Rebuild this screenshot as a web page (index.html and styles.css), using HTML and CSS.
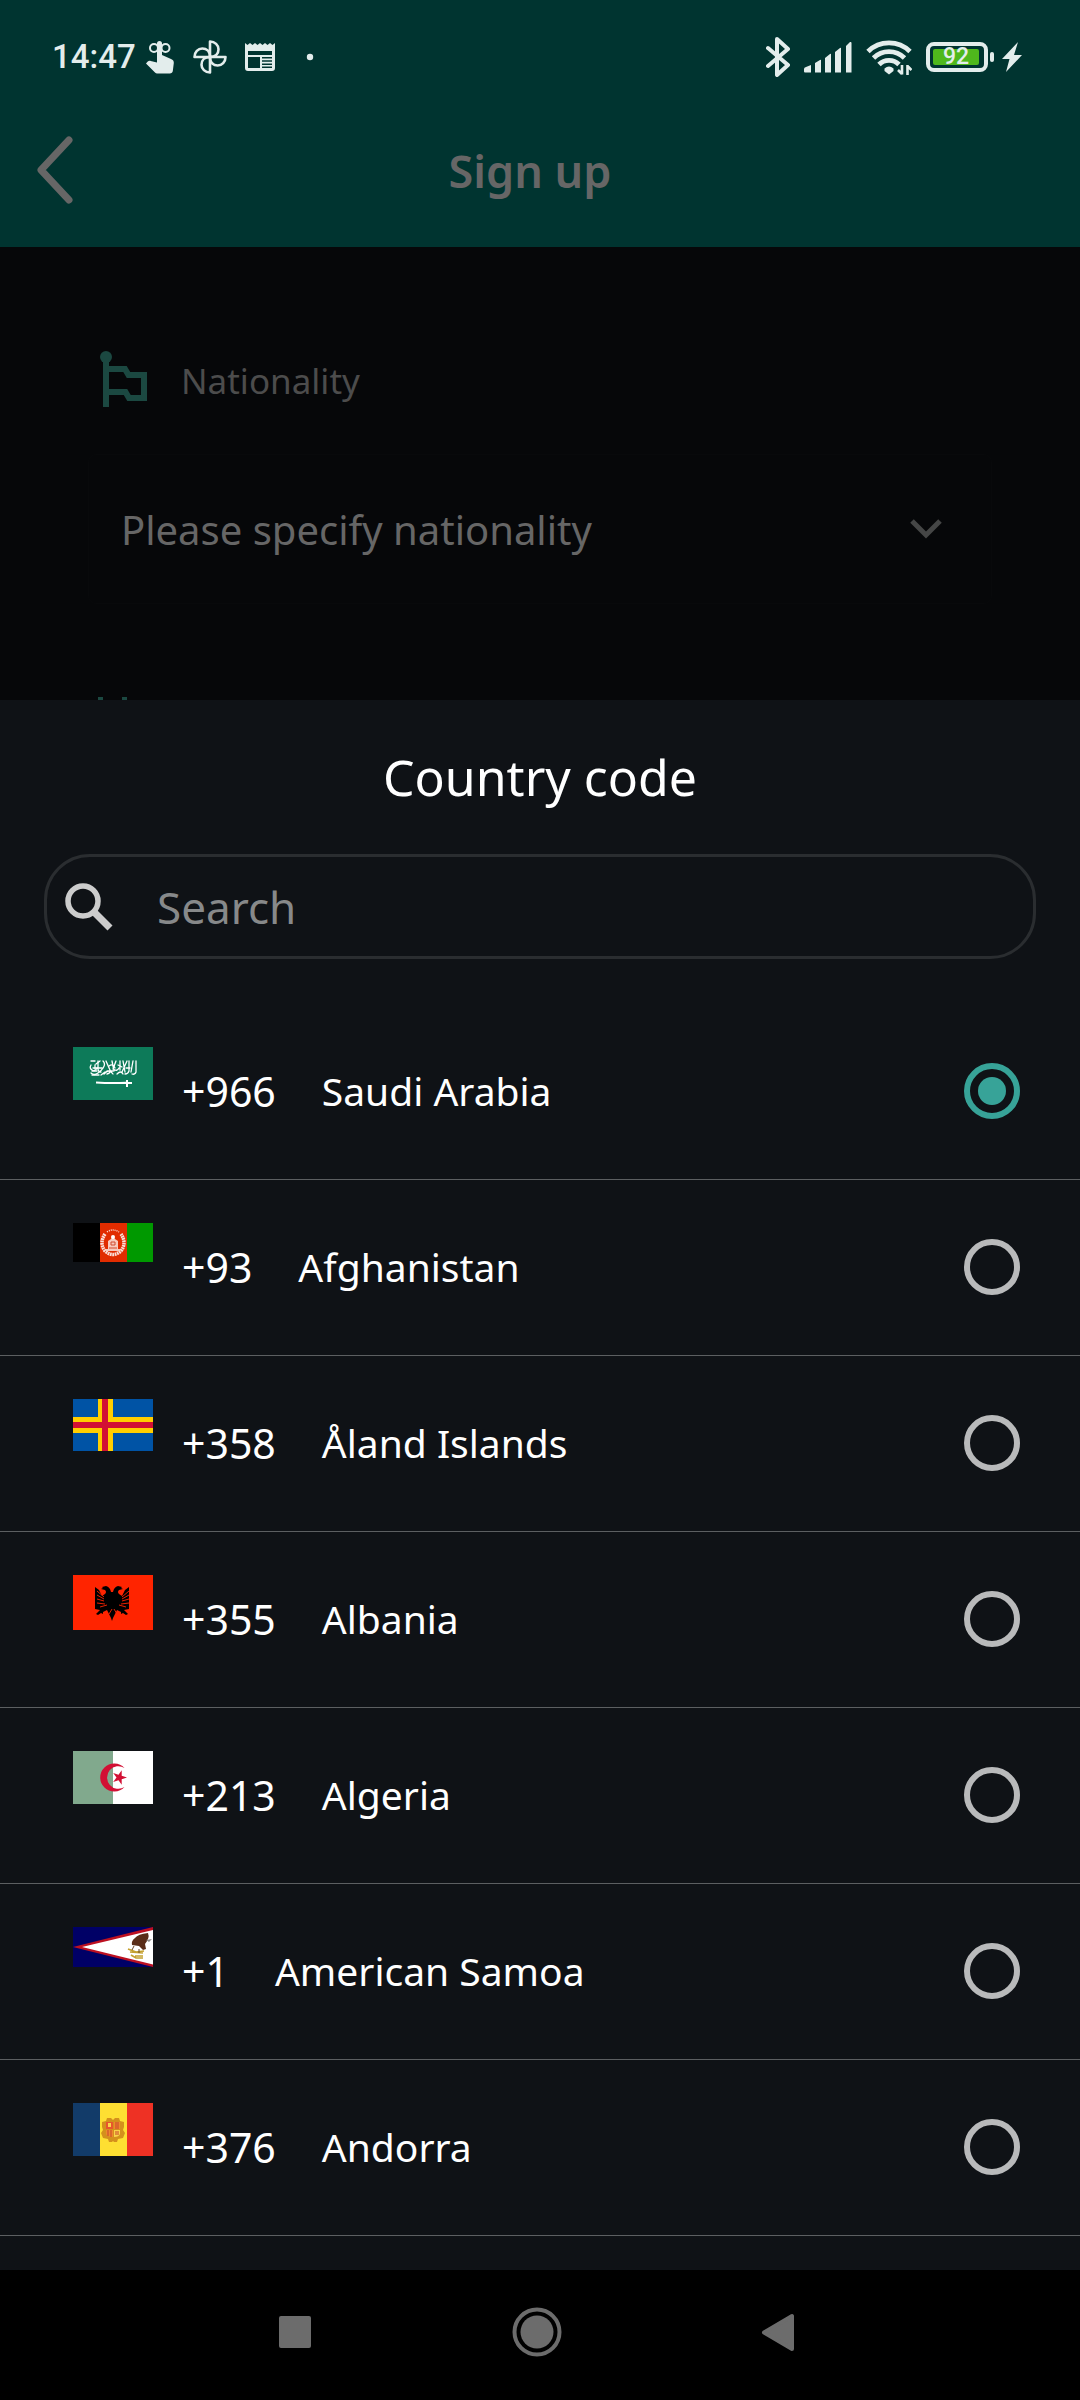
FILE: index.html
```html
<!DOCTYPE html>
<html lang="en">
<head>
<meta charset="utf-8">
<meta name="viewport" content="width=device-width, initial-scale=1">
<title>Sign up</title>
<link rel="stylesheet" href="styles.css">
</head>
<body>
<div class="screen">
  <header class="top">
    <div class="status">
      <div class="status-left">
        <span class="clock">14:47</span>
        <svg class="status-icon" viewBox="0 0 36 36" fill="currentColor" aria-hidden="true">
          <path d="M15 4.500a2.500 2.500 0 0 1 5 0V16l9 4c2 .8 3 2 2.800 4l-1 8c-.3 1.600-1.200 2.500-3 2.500H16c-1.500 0-2.500-.5-3.500-1.500L4 24.500l1.500-1.800c1-.8 2-1 3.200-.7L15 23.500z"/>
          <g fill="none" stroke="currentColor" stroke-width="2"><circle cx="12" cy="9" r="4"/><circle cx="23.500" cy="9" r="4"/></g>
        </svg>
        <svg class="status-icon" viewBox="0 0 36 36" fill="none" stroke="currentColor" stroke-width="2.600" stroke-linejoin="round" aria-hidden="true">
          <path d="M18 18V2.500c5 0 8.500 3.600 8.500 7.800 0 4-2.500 7.700-8.500 7.700z"/>
          <path d="M18 18h15.500c0 5-3.600 8.500-7.800 8.500-4 0-7.700-2.500-7.700-8.500z"/>
          <path d="M18 18v15.500c-5 0-8.500-3.600-8.500-7.800 0-4 2.500-7.700 8.500-7.700z"/>
          <path d="M18 18H2.500c0-5 3.600-8.500 7.800-8.500 4 0 7.700 2.500 7.700 8.500z"/>
        </svg>
        <svg class="status-icon" viewBox="0 0 36 36" aria-hidden="true">
          <path fill="currentColor" fill-rule="evenodd" d="M3 4l2.500 2L8 4l2.500 2L13 4l2.500 2L18 4l2.500 2L23 4l2.500 2L28 4l2.500 2L33 4v25a3 3 0 0 1-3 3H6a3 3 0 0 1-3-3zM6 12v4h24v-4zm0 6v11h12V18zm14 0v1.400h10V18zm0 3.200v1.600h10v-1.600zm0 3.200V26h10v-1.600zm0 3.200V29h10v-1.400z"/>
        </svg>
        <svg class="status-icon" viewBox="0 0 36 36" fill="currentColor" aria-hidden="true"><circle cx="18" cy="18" r="3.200"/></svg>
      </div>
      <div class="status-right">
        <svg class="bluetooth" viewBox="0 0 24 40" fill="none" stroke="currentColor" stroke-width="4" stroke-linejoin="round" stroke-linecap="round" aria-hidden="true"><path d="M2 11l20 17-11 10V2l11 10L2 29"/></svg>
        <svg class="signal" viewBox="0 0 48 32" fill="currentColor" aria-hidden="true">
          <path d="M0 28q0-1.500 2-2l5-2v7.500H1q-1 0-1-1zM11 22l5-3q1-.5 1 0v12.500h-6zM21 17l5-4q1-.5 1 0v18.500h-6zM31 11l5-4q1-.5 1 0v24.500h-6zM42 5l4-4q1.500-.5 1.500 1v29.500H42z"/>
        </svg>
        <svg class="wifi" viewBox="0 0 46 36" fill="none" stroke="currentColor" stroke-width="4.800" aria-hidden="true">
          <path d="M2 12.500a30 30 0 0 1 42 0"/><path d="M7.500 19a22 22 0 0 1 31 0"/><path d="M13 25.500a14 14 0 0 1 20 0"/>
          <path fill="currentColor" stroke="none" d="M18.500 29.500q4.500-4 9 0v2.500l-4.500 3.500-4.500-3.500z"/>
          <path stroke-width="2.600" d="M36 26v9.500M36 35l-4-4M41.500 36v-10M41.500 27l4 4"/>
        </svg>
        <div class="power">
          <span class="battery"><span class="charge">92</span></span>
          <svg class="bolt" viewBox="0 0 20 30" fill="currentColor" aria-hidden="true"><path d="M16 0L0 17h7.500L4 30l16-17h-8z"/></svg>
        </div>
      </div>
    </div>
    <div class="titlebar">
      <button class="back" type="button" aria-label="Back">
        <svg viewBox="0 0 36 68" fill="none" stroke="currentColor" stroke-width="7" stroke-linecap="round" stroke-linejoin="round" aria-hidden="true"><path d="M32 4L4 34l28 30"/></svg>
      </button>
      <h1>Sign up</h1>
    </div>
  </header>

  <main class="form">
    <label class="field-label" for="nationality">
      <svg class="flag-icon" viewBox="0 0 48 56" aria-hidden="true">
        <circle cx="6" cy="6" r="6" fill="currentColor"/>
        <path d="M6 6v50M6 18h19l3.500 6H44v23H29l-3.500-6H6" fill="none" stroke="currentColor" stroke-width="6"/>
      </svg>
      <span>Nationality</span>
    </label>
    <div class="select-wrap">
      <select id="nationality"><option>Please specify nationality</option></select>
      <svg class="chevron" viewBox="0 0 32 20" fill="none" stroke="currentColor" stroke-width="5" aria-hidden="true"><path d="M2 2l14 14L30 2"/></svg>
    </div>
    <svg class="next-icon" viewBox="0 0 32 3" fill="currentColor" aria-hidden="true"><path d="M0 0h5v3H0zM24 0h5v3h-5z"/></svg>
  </main>

  <section class="sheet" aria-labelledby="sheet-title">
    <h2 id="sheet-title">Country code</h2>
    <div class="search">
      <svg viewBox="0 0 48 48" fill="none" stroke="currentColor" aria-hidden="true"><circle cx="18" cy="18" r="15" stroke-width="5.500"/><path d="M29 29l16 16" stroke-width="7"/></svg>
      <input type="search" placeholder="Search" aria-label="Search">
    </div>
    <ul class="countries">
      <li><label class="country">
        <svg class="flag" viewBox="0 0 80 53" aria-hidden="true">
          <path fill="#0d7a59" d="M0 0h80v53H0z"/>
          <g fill="none" stroke="#fff" stroke-width="1.300" stroke-linecap="round">
            <path d="M18 18q-2 3 1 5t5-2M18 26q3 3 7 0t5-5M25 14v8q0 3 3 3M30 14q3 3 0 7M33 14l4 9q1 3-3 4M39 14l2 10M43 14l-3 8q4 3 6-1M47 14v9M50 14l2 11M54 14l-5 11M56 14v10q-1 3-4 3M60 14l-2 11M63 14v11q-1 3-4 2"/>
            <path d="M18 14h4M20 21h9M19 28h7M31 27q5-6 9 0M36 19q4-3 6 2M44 27q4-4 6 0M23 17l4-3M19 24h5M28 28l4-3M34 24h6M45 18l4 2M53 21h4M22 18v4"/>
          </g>
          <path d="M23 35.500q15 1 30 .3M50 36h9M54 33v7" fill="none" stroke="#fff" stroke-width="2"/>
        </svg>
        <span class="code">+966</span><span class="name">Saudi Arabia</span>
        <input type="radio" name="country" checked>
      </label></li>
      <li><label class="country">
        <svg class="flag" viewBox="0 0 80 39" aria-hidden="true">
          <path fill="#000" d="M0 0h27v39H0z"/><path fill="#e12c00" d="M27 0h27v39H27z"/><path fill="#009900" d="M54 0h26v39H54z"/>
          <g fill="none" stroke="#fff" opacity=".85">
            <path d="M32 11q-6 9 0 17 8 7 16 0 6-8 0-17" stroke-width="3.500" stroke-dasharray="1.800 .6"/>
            <path d="M34 9q6-4 12 0" stroke-width="1.500" stroke-dasharray="1 1"/>
          </g>
          <path fill="#f7c9bd" d="M35 26V18l3-2q2-4 4 0l3 2v8h2v2H33v-2z"/><circle cx="40" cy="14" r="2" fill="#fff"/>
          <path d="M38 19v3h4v-3zM36 25h8" fill="none" stroke="#d14a30"/>
        </svg>
        <span class="code">+93</span><span class="name">Afghanistan</span>
        <input type="radio" name="country">
      </label></li>
      <li><label class="country">
        <svg class="flag" viewBox="0 0 80 52" aria-hidden="true">
          <path fill="#0053a5" d="M0 0h80v52H0z"/><path fill="#ffce00" d="M25 0h15v18h40v16H40v18H25V34H0V18h25z"/><path fill="#d21034" d="M29 0h6v23h45v6H35v23h-6V29H0v-6h29z"/>
        </svg>
        <span class="code">+358</span><span class="name">Åland Islands</span>
        <input type="radio" name="country">
      </label></li>
      <li><label class="country">
        <svg class="flag" viewBox="0 0 80 55" aria-hidden="true">
          <path fill="#ff2400" d="M0 0h80v55H0z"/>
          <path d="M40 17q1-5 5-6l4 1-1 1 2 1-4 1q-2 2 0 4l3 2 3-6 4-3v22l-5 1 4 4-2 1-3-2-2 1v-2l-4-2-2 4-2 4-1 3-1-3-2-4-2-4-4 2v2l-2-1-3 2-2-1 4-4-5-1V12l4 3 3 6 3-2q2-2 0-4l-4-1 2-1-1-1 4-1q4 1 5 6z"/>
          <path d="M24 16l7 6M24 20l7 4M24 24l7 2M24 28l8 1M56 16l-7 6M56 20l-7 4M56 24l-7 2M56 28l-8 1M27 32l7-2M53 32l-7-2M36 39l3-5M44 39l-3-5" stroke="#ff2400" stroke-width=".9"/>
        </svg>
        <span class="code">+355</span><span class="name">Albania</span>
        <input type="radio" name="country">
      </label></li>
      <li><label class="country">
        <svg class="flag" viewBox="0 0 80 53" aria-hidden="true">
          <path fill="#81a98d" d="M0 0h40v53H0z"/><path fill="#fff" d="M40 0h40v53H40z"/>
          <path fill="#d21034" d="M51.500 17A14 14 0 1 0 51.500 36 11.300 11.300 0 1 1 51.500 17zM54 26.500l-5.300 1.700v5.500l-3.200-4.500-5.300 1.700 3.300-4.400-3.300-4.400 5.300 1.700 3.200-4.500v5.500z"/>
        </svg>
        <span class="code">+213</span><span class="name">Algeria</span>
        <input type="radio" name="country">
      </label></li>
      <li><label class="country">
        <svg class="flag" viewBox="0 0 80 40" aria-hidden="true">
          <path fill="#000066" d="M0 0h80v40H0z"/><path fill="#bd1021" d="M80 0v40L0 20z"/><path fill="#fff" d="M80 3v34.500L9 20z"/>
          <path fill="#5a2d18" d="M75 6q-10 1-13 5-4 3-3 7l7 1 4 4 3-1-1-5q5-6 3-11z"/>
          <path fill="#8e8a88" d="M73 13l6-1-3 3z"/>
          <path d="M55 22l8 3 8-1M57 25l13 1M58 28l5 3h7M62 29l8 0" fill="none" stroke="#c4a02f" stroke-width="1.700"/>
          <path d="M66 22v4M61 19l-2 4" stroke="#6b4a2a"/>
        </svg>
        <span class="code">+1</span><span class="name">American Samoa</span>
        <input type="radio" name="country">
      </label></li>
      <li><label class="country">
        <svg class="flag" viewBox="0 0 80 53" aria-hidden="true">
          <path fill="#123b69" d="M0 0h27v53H0z"/><path fill="#fedf32" d="M27 0h27v53H27z"/><path fill="#ee3124" d="M54 0h26v53H54z"/>
          <path fill="#d4901c" d="M34 15h4l2 2 2-2h4l1 3 4 1v5l-1 3 2 3-2 5-5 1-1 3h-3l-1-1-1 1h-3l-1-3-5-1-2-5 2-3-1-3v-5l4-1z"/>
          <path fill="#e8552d" d="M33 19h7v7h-7z"/><path fill="#f08a2c" d="M41 19h6v7h-6zM33 27h7v7q-6 0-7-3z"/><path fill="#fbd34a" d="M41 27h6v4q-1 3-6 3zM35 20h3v4h-3z"/>
          <path d="M43 19v7M45 19v7M35 27v6M38 27v7M42 29h4M42 31h4" stroke="#c6452a"/>
        </svg>
        <span class="code">+376</span><span class="name">Andorra</span>
        <input type="radio" name="country">
      </label></li>
    </ul>
  </section>

  <nav class="navbar" aria-label="System">
    <button type="button" aria-label="Recent apps"><svg viewBox="0 0 50 50" fill="currentColor" aria-hidden="true"><rect x="9" y="9" width="32" height="32" rx="2"/></svg></button>
    <button type="button" aria-label="Home"><svg viewBox="0 0 50 50" aria-hidden="true"><circle cx="25" cy="25" r="22.500" fill="none" stroke="currentColor" stroke-width="4"/><circle cx="25" cy="25" r="16.500" fill="currentColor"/></svg></button>
    <button type="button" aria-label="Back"><svg viewBox="0 0 50 50" fill="currentColor" stroke="currentColor" stroke-width="4" stroke-linejoin="round" aria-hidden="true"><path d="M38 9v33L10 25.500z"/></svg></button>
  </nav>
</div>
</body>
</html>
```
FILE: styles.css
```css
* { box-sizing: border-box; }

body {
  margin: 0;
  background: #000;
  color: #fff;
  font-family: "Noto Sans", "Open Sans", sans-serif;
}

h1, h2, ul { margin: 0; padding: 0; }
svg { display: block; flex: none; }
button { border: 0; padding: 0; background: none; color: inherit; }

.screen {
  display: flex;
  flex-direction: column;
  min-height: 100vh;
}

/* Status bar and title */
.top { background: #003430; }

.status {
  display: flex;
  justify-content: space-between;
  padding: 37px 58px 20px 52px;
  color: #e3edec;
}

.status-left, .status-right {
  display: flex;
  align-items: center;
  height: 40px;
  gap: 14px;
}

.clock {
  margin-right: -8px;
  font: 500 33px/40px Roboto, sans-serif;
}

.status-icon { width: 36px; height: 36px; }
.bluetooth { width: 24px; height: 40px; }
.signal { width: 48px; height: 32px; }
.wifi { width: 46px; height: 36px; }
.bolt { width: 20px; height: 30px; }

.power { display: flex; align-items: center; gap: 14px; }

.battery {
  position: relative;
  width: 62px;
  height: 30px;
  padding: 3px;
  border: 4px solid currentColor;
  border-radius: 8px;
}

.battery::after {
  content: "";
  position: absolute;
  top: 6px;
  right: -10px;
  width: 4px;
  height: 10px;
  border-radius: 2px;
  background: currentColor;
}

.charge {
  display: block;
  width: 46px;
  border-radius: 2px;
  background: #4fb81c;
  font: 500 23px/16px Roboto, sans-serif;
  text-align: center;
}

.titlebar {
  display: grid;
  grid-template-columns: 1fr auto 1fr;
  align-items: center;
  height: 150px;
  padding: 0 57px 4px 37px;
  color: #666;
}

.back { width: 36px; }
.back svg { width: 36px; height: 68px; }

h1 { font-size: 45px; font-weight: 600; }

/* Dimmed form behind the sheet */
.form {
  padding: 104px 88px 0;
  background: #060709;
}

.field-label {
  display: flex;
  align-items: center;
  gap: 33px;
  padding-left: 12px;
  color: #4c4c4c;
  font-size: 35px;
  line-height: 52px;
}

.field-label span { padding-top: 4px; }

.flag-icon { width: 48px; height: 56px; color: #1b4841; }

.select-wrap {
  display: grid;
  align-items: center;
  margin: 47px 0 93px;
}

.select-wrap > * { grid-area: 1 / 1; }

select {
  width: 100%;
  height: 150px;
  padding: 0 32px;
  border: 1px solid #08090b;
  border-radius: 8px;
  appearance: none;
  background: transparent;
  color: #666;
  font: 40px "Noto Sans", sans-serif;
}

.chevron {
  justify-self: end;
  width: 32px;
  height: 20px;
  margin-right: 50px;
  color: #454646;
  pointer-events: none;
}

.next-icon { width: 32px; height: 3px; margin-left: 10px; color: #1b4841; }

/* Country picker */
.sheet {
  flex: 1;
  padding: 44px 0 34px;
  background: #0f1216;
}

h2 {
  font-size: 50px;
  font-weight: 400;
  line-height: 66px;
  text-align: center;
}

.search {
  display: flex;
  align-items: center;
  gap: 44px;
  height: 105px;
  margin: 44px 44px 45px;
  padding: 0 18px;
  border: 3px solid #2a2d30;
  border-radius: 46px;
  color: #ccc;
}

.search svg { width: 48px; height: 48px; }

.search input {
  flex: 1;
  min-width: 0;
  padding: 0;
  border: 0;
  outline: 0;
  background: none;
  color: #fff;
  font: 44px "Noto Sans", sans-serif;
}

.search input::placeholder { color: #87898a; opacity: 1; }

.countries { list-style: none; }

.country {
  display: flex;
  align-items: center;
  height: 176px;
  padding: 0 60px 2px 73px;
  border-bottom: 1px solid #5c5f61;
}

.flag { width: 80px; align-self: flex-start; margin: 43px 29px 0 0; }
.code { margin-right: 46px; font-size: 41px; }
.name { flex: 1; font-size: 39px; }

.country input {
  display: grid;
  place-items: center;
  width: 56px;
  height: 56px;
  margin: 0;
  border: 6px solid #b9babb;
  border-radius: 50%;
  appearance: none;
}

.country input:checked { border-color: #37a398; }

.country input:checked::before {
  content: "";
  width: 28px;
  height: 28px;
  border-radius: 50%;
  background: #37a398;
}

/* System navigation */
.navbar {
  display: flex;
  justify-content: center;
  gap: 192px;
  padding: 37px 6px 43px 0;
  background: #000;
  color: #6c6c6c;
}

.navbar svg { width: 50px; height: 50px; }
```
